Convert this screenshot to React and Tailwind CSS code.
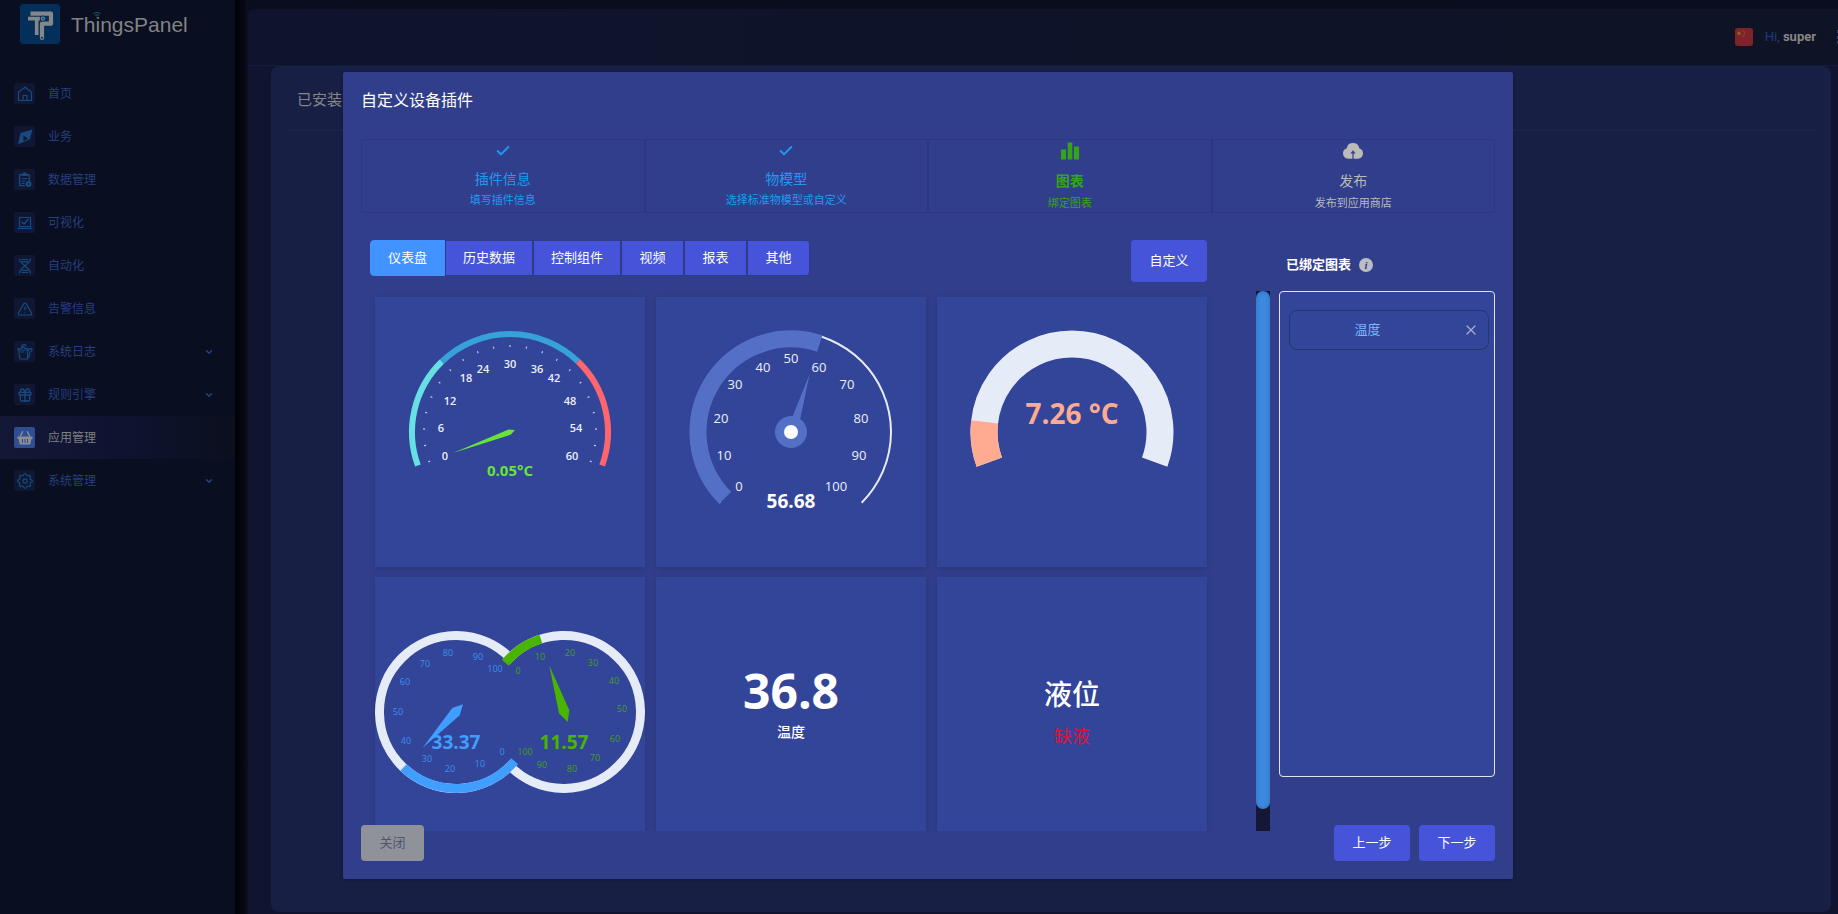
import React from "react";
import { House, TriangleAlert, Gift, ChevronDown, Check, X } from "lucide-react";

/* ---------- sidebar icons ---------- */

const stroke = {
  fill: "none",
  stroke: "currentColor",
  strokeWidth: 1.2,
  strokeLinecap: "round",
  strokeLinejoin: "round",
};

function Icon({ children }) {
  return (
    <svg viewBox="0 0 16 16" className="size-4" aria-hidden="true">
      {children}
    </svg>
  );
}

const HomeIcon = () => (
  <Icon>
    <path {...stroke} d="M1.5 6.2 8 1.2l6.500 5v8.300h-13z" />
    <path {...stroke} d="M6 14.500V9.500h4v5" />
  </Icon>
);

const CompassIcon = () => (
  <Icon>
    <path
      fill="currentColor"
      fillRule="evenodd"
      d="M15.500.5 12.800 10.200 1 15.200 3.500 4zM6.500 6.500v5.500l4.500-2.500z"
    />
  </Icon>
);

const ClipboardIcon = () => (
  <Icon>
    <path {...stroke} strokeWidth="1.400" d="M7.500 13.600H2.600V2.800h9.600v5.700" />
    <path fill="currentColor" d="M5 1.200h1.500a1 1 0 0 1 2 0H10v2.900H5z" />
    <path {...stroke} d="M5 6.500h5M5 9h3.500M5 11.300h2" />
    <circle cx="11.500" cy="12" r="3" fill="currentColor" />
    <circle cx="11.500" cy="12" r="0.800" fill="#0a1129" />
  </Icon>
);

const LaptopIcon = () => (
  <Icon>
    <path {...stroke} d="M2.500 11.500V2.500h11v9zM1 13.300h14" />
    <path {...stroke} strokeWidth="1.500" d="M5 7.200 7 9l4-4.500" />
  </Icon>
);

const DnaIcon = () => (
  <Icon>
    <path
      {...stroke}
      d="M2.500 1c0 5 11 8.500 11 14M13.500 1c0 5-11 8.500-11 14M5 1.500h6M5.500 3.700h5M5.500 12.300h5M5 14.500h6"
    />
  </Icon>
);

const JugIcon = () => (
  <Icon>
    <path {...stroke} d="M2 6h8.500v9H3C2 12 2 9 2 6zM1 6V4.500h3L6 2.500l2 2h3V6" />
    <path {...stroke} d="M5 3.500a2 2 0 0 1 4-1.500M10.800 7c1.500-3 4.200-3 4.200-1.200 0 2-3 2.200-2.700 4 .3 2-.3 3.700-1.800 4.200M4 8h3" />
  </Icon>
);

const BasketIcon = () => (
  <Icon>
    <path fill="currentColor" d="M.5 6.500h15v2.600h-1l-1.300 5.400H2.800L1.500 9.100h-1z" />
    <path {...stroke} strokeWidth="1.500" d="M3.500 6 5.500 1.800M12.500 6l-2-4.200" />
    <path stroke="#2d4f92" strokeWidth="1" d="M5.500 9v4M8 9v4M10.500 9v4" />
  </Icon>
);

const GearIcon = () => {
  const teeth = Array.from({ length: 32 }, (_, i) => {
    const r = i % 4 < 2 ? 7.3 : 5.7;
    const a = ((i - 0.5) * Math.PI) / 16;
    return `${(8 + r * Math.sin(a)).toFixed(2)},${(8 - r * Math.cos(a)).toFixed(2)}`;
  }).join(" ");
  return (
    <Icon>
      <polygon {...stroke} points={teeth} />
      <circle {...stroke} cx="8" cy="8" r="2.200" />
    </Icon>
  );
};

const NAV = [
  { label: "首页", icon: <HomeIcon /> },
  { label: "业务", icon: <CompassIcon /> },
  { label: "数据管理", icon: <ClipboardIcon /> },
  { label: "可视化", icon: <LaptopIcon /> },
  { label: "自动化", icon: <DnaIcon /> },
  { label: "告警信息", icon: <TriangleAlert size={16} strokeWidth={1.8} /> },
  { label: "系统日志", icon: <JugIcon />, more: true },
  { label: "规则引擎", icon: <Gift size={16} strokeWidth={2} />, more: true },
  { label: "应用管理", icon: <BasketIcon />, active: true },
  { label: "系统管理", icon: <GearIcon />, more: true },
];

function Logo() {
  return (
    <a href="#" className="ml-5 flex h-10 items-center gap-[11px]">
      <svg viewBox="0 0 40 40" className="size-10" aria-hidden="true">
        <rect width="40" height="40" rx="3" fill="#032f5a" />
        <g fill="none" stroke="#858789" strokeLinejoin="round">
          <path strokeWidth="4.200" d="M10.500 9.700H31V19.700H22V34" />
          <path strokeWidth="3.600" d="M8 14.600H20M16.700 14.600V31" />
        </g>
        <circle cx="22" cy="34" r="2.100" fill="#858789" />
        <circle cx="22.800" cy="14.600" r="2.600" fill="#858789" stroke="#032f5a" strokeWidth="1" />
        <circle cx="22.800" cy="14.600" r="1.200" fill="#0e5573" />
        <circle cx="22" cy="33.800" r="1" fill="#032f5a" />
      </svg>
      <span className="relative mt-0.5 font-['Liberation_Sans',sans-serif] text-[21px] leading-6 text-[#828385]">
        ThingsPanel
        <svg viewBox="0 0 8 6" className="absolute -top-px left-[22px] h-1.5 w-2" aria-hidden="true">
          <path d="M.5 1.800Q4-.8 7.500 1.800M2 3.500q2-1.300 4 0" fill="none" stroke="#12505f" strokeWidth="1.200" />
          <circle cx="4" cy="5.200" r=".8" fill="#12505f" />
        </svg>
      </span>
    </a>
  );
}

function Sidebar() {
  return (
    <aside className="w-[235px] shrink-0 bg-[#090e20] pt-1">
      <Logo />
      <nav className="mt-7">
        {NAV.map((item) => (
          <a
            key={item.label}
            href="#"
            className={
              "flex h-[43px] items-center pr-[21px] pl-3.5 text-xs " +
              (item.active
                ? "bg-linear-to-r from-[#121836] via-[#0e1430] to-[#0b0f1e] text-[#808080]"
                : "text-[#273f7f]")
            }
          >
            <span
              className={
                "flex size-[21px] items-center justify-center rounded-xs " +
                (item.active ? "bg-[#2d4f92] text-[#8b8d93]" : "bg-[#0f1733] text-[#184a80]")
              }
            >
              {item.icon}
            </span>
            <span className="ml-[13px] flex-1 pb-0.5">{item.label}</span>
            {item.more && <ChevronDown size={10} strokeWidth={3.500} className="text-[#27437f]" />}
          </a>
        ))}
      </nav>
    </aside>
  );
}

function Header() {
  return (
    <header className="flex h-[57px] items-center justify-end overflow-hidden rounded-tl-md border-b border-[#141b3b] bg-linear-to-r from-[#0f132d] to-[#0e1325]">
      <svg viewBox="0 0 18 18" className="size-[18px] shrink-0" aria-hidden="true">
        <rect width="18" height="18" rx="3" fill="#7d2329" />
        <path fill="#8a6a1e" d="m4 3 .7 1.500 1.600.1-1.200 1.100.4 1.600L4 6.500l-1.500.8.4-1.600-1.200-1.100 1.600-.1z" />
        <g fill="#8a5a1e">
          <circle cx="8" cy="2.800" r=".7" />
          <circle cx="9.600" cy="4.300" r=".7" />
          <circle cx="9.600" cy="6.400" r=".7" />
          <circle cx="8" cy="8" r=".7" />
        </g>
      </svg>
      <span className="ml-3 font-[Roboto,sans-serif] text-[13px] whitespace-nowrap text-[#223a80]">
        Hi, <b className="text-[#868686]">super</b>
      </span>
      <button type="button" aria-label="更多" className="-mr-3.5 ml-5 h-4 w-4 shrink-0 translate-x-0 text-[#27407f]">
        <svg viewBox="0 0 16 16" className="size-4" aria-hidden="true">
          <path
            fill="currentColor"
            d="M1 1h3v3H1zM7 1h3v3H7zM13 1h3v3h-3zM1 7h3v3H1zM7 7h3v3H7zM13 7h3v3h-3zM1 12h3v3H1zM7 12h3v3H7zM13 12h3v3h-3z"
          />
        </svg>
      </button>
    </header>
  );
}

/* ---------- gauges ---------- */

const point = (cx, cy, r, deg) => {
  const a = (deg * Math.PI) / 180;
  return [(cx + r * Math.cos(a)).toFixed(2), (cy - r * Math.sin(a)).toFixed(2)];
};

/* Clockwise arc between two angles, measured counter-clockwise from east. */
function Arc({ cx = 135, cy = 135, r, from, to, width, color }) {
  const [x1, y1] = point(cx, cy, r, from);
  const [x2, y2] = point(cx, cy, r, to);
  const large = from - to > 180 ? 1 : 0;
  return (
    <path
      d={`M${x1} ${y1}A${r} ${r} 0 ${large} 1 ${x2} ${y2}`}
      fill="none"
      stroke={color}
      strokeWidth={width}
    />
  );
}

function Labels({ items, size, color, weight = 400 }) {
  return items.map(([text, x, y]) => (
    <text
      key={text}
      x={x}
      y={y}
      dy="0.36em"
      textAnchor="middle"
      fontSize={size}
      fontWeight={weight}
      fill={color}
    >
      {text}
    </text>
  ));
}

function Chart({ children, label }) {
  return (
    <svg
      viewBox="0 0 270 270"
      role="img"
      aria-label={label}
      className="size-full font-['Open_Sans','Noto_Sans',sans-serif]"
    >
      {children}
    </svg>
  );
}

function TemperatureGauge() {
  return (
    <Chart label="0.05°C">
      <Arc r={98} from={200} to={134} width={6} color="#67e0e3" />
      <Arc r={98} from={134} to={46} width={6} color="#37a2da" />
      <Arc r={98} from={46} to={-20} width={6} color="#fd666d" />
      {Array.from({ length: 21 }, (_, i) => {
        const [x1, y1] = point(135, 135, 87, 200 - i * 11);
        const [x2, y2] = point(135, 135, 85, 200 - i * 11);
        return <line key={i} x1={x1} y1={y1} x2={x2} y2={y2} stroke="#c5cbe4" strokeWidth="1.200" />;
      })}
      <Labels
        size={11}
        weight={600}
        color="#eef0f8"
        items={[
          ["0", 70, 159],
          ["6", 66, 131],
          ["12", 75, 104],
          ["18", 91, 81],
          ["24", 108, 72],
          ["30", 135, 67],
          ["36", 162, 72],
          ["42", 179, 81],
          ["48", 195, 104],
          ["54", 201, 131],
          ["60", 197, 159],
        ]}
      />
      <path d="M78 156 133.500 132.400 140 133 136 137.600z" fill="#67e33a" />
      <text x="135" y="179" textAnchor="middle" fontSize="15" fontWeight="700" fill="#67e33a">
        0.05°C
      </text>
    </Chart>
  );
}

function SpeedGauge() {
  return (
    <Chart label="56.68">
      <Arc r={100} from={225} to={-45} width={2} color="#e6ebf8" />
      <Arc r={93} from={225} to={72} width={17} color="#5470c6" />
      <path d="M153.700 77 135.500 122 144 123z" fill="#5470c6" />
      <circle cx="135" cy="135" r="16" fill="#5470c6" />
      <circle cx="135" cy="135" r="7" fill="#fff" />
      <Labels
        size={13}
        weight={500}
        color="#eef0f8"
        items={[
          ["0", 83, 189],
          ["10", 68, 158],
          ["20", 65, 121],
          ["30", 79, 87],
          ["40", 107, 70],
          ["50", 135, 61],
          ["60", 163, 70],
          ["70", 191, 87],
          ["80", 205, 121],
          ["90", 203, 158],
          ["100", 180, 189],
        ]}
      />
      <text x="135" y="211" textAnchor="middle" fontSize="19" fontWeight="700" fill="#fff">
        56.68
      </text>
    </Chart>
  );
}

function RingGauge() {
  return (
    <Chart label="7.26 °C">
      <Arc r={88} from={200} to={-20} width={27} color="#e6ebf8" />
      <Arc r={88} from={200} to={173.400} width={27} color="#ffab91" />
      <text x="135" y="127" textAnchor="middle" fontSize="28" fontWeight="700" fill="#ffab91">
        7.26 °C
      </text>
    </Chart>
  );
}

function DoubleGauge() {
  return (
    <Chart label="33.37 / 11.57">
      <Arc cx={81} r={76.500} from={318} to={44} width={9} color="#e6ebf8" />
      <Arc cx={189} r={76.500} from={138} to={-136} width={9} color="#e6ebf8" />
      <Arc cx={81} r={76.500} from={320} to={226.600} width={9} color="#409eff" />
      <Arc cx={189} r={76.500} from={140} to={107.600} width={9} color="#4ab500" />
      <Labels
        size={9}
        weight={500}
        color="#3c8ff0"
        items={[
          ["0", 127, 175],
          ["10", 105, 187],
          ["20", 75, 192],
          ["30", 52, 182],
          ["40", 31, 164],
          ["50", 23, 135],
          ["60", 30, 105],
          ["70", 50, 87],
          ["80", 73, 76],
          ["90", 103, 80],
          ["100", 120, 92],
        ]}
      />
      <Labels
        size={9}
        weight={500}
        color="#459f1c"
        items={[
          ["0", 143, 94],
          ["10", 165, 80],
          ["20", 195, 76],
          ["30", 218, 86],
          ["40", 239, 104],
          ["50", 247, 132],
          ["60", 240, 162],
          ["70", 220, 181],
          ["80", 197, 192],
          ["90", 167, 188],
          ["100", 150, 175],
        ]}
      />
      <path d="M47.500 171 77.300 131 88 127.300 84.700 138.300z" fill="#409eff" />
      <path d="M174.300 88.500 184 136.300 192.700 145 194.300 133.300z" fill="#4ab500" />
      <text x="81" y="172" textAnchor="middle" fontSize="19" fontWeight="700" fill="#409eff">
        33.37
      </text>
      <text x="189" y="172" textAnchor="middle" fontSize="19" fontWeight="700" fill="#4ab500">
        11.57
      </text>
    </Chart>
  );
}

function Card({ children }) {
  return (
    <div className="flex aspect-square flex-col items-center justify-center bg-[#324599] shadow-[0_2px_6px_rgba(0,0,0,0.15)]">
      {children}
    </div>
  );
}

/* ---------- dialog ---------- */

function Step({ icon, title, desc, className }) {
  return (
    <li className={"flex flex-1 flex-col items-center border border-[#2c3785] " + className}>
      {icon}
      {title}
      <span className="text-[11px] leading-4">{desc}</span>
    </li>
  );
}

function Steps() {
  const checked = (
    <span className="flex h-[22px] items-center">
      <Check size={16} strokeWidth={3} />
    </span>
  );
  return (
    <ol className="flex h-[74px]">
      <Step
        className="text-[#1d9bf0]"
        icon={checked}
        title={<span className="mt-1.5 mb-[3px] text-sm leading-5">插件信息</span>}
        desc="填写插件信息"
      />
      <Step
        className="text-[#1d9bf0]"
        icon={checked}
        title={<span className="mt-1.5 mb-[3px] text-sm leading-5">物模型</span>}
        desc="选择标准物模型或自定义"
      />
      <Step
        className="text-[#36a417]"
        icon={
          <svg viewBox="0 0 18 18" className="mt-[2px] size-[18px]" aria-hidden="true">
            <path fill="currentColor" d="M0 7.500h5v10H0zM6.700.5h4.600v17H6.700zM13 4.500h5v13h-5z" />
          </svg>
        }
        title={<b className="mt-2.5 mb-1 text-sm leading-5">图表</b>}
        desc="绑定图表"
      />
      <Step
        className="text-[#bbbbb9]"
        icon={
          <svg viewBox="0 0 22 18" className="mt-[2px] h-[18px] w-[22px]" aria-hidden="true">
            <path
              fill="currentColor"
              fillRule="evenodd"
              d="M6 16.700A5.400 5.400 0 0 1 4.700 6.200a6.400 6.400 0 0 1 12.600 0A5.400 5.400 0 0 1 16 16.700h-4.400V11.500h2L11 8.300l-2.600 3.200h2v5.200z"
            />
          </svg>
        }
        title={<span className="mt-2.5 mb-1 text-sm leading-5">发布</span>}
        desc="发布到应用商店"
      />
    </ol>
  );
}

const TABS = ["仪表盘", "历史数据", "控制组件", "视频", "报表", "其他"];

function Tabs() {
  return (
    <div className="flex h-9" role="tablist">
      {TABS.map((tab, i) => (
        <button
          key={tab}
          type="button"
          role="tab"
          aria-selected={i === 0}
          className={
            "min-w-[63px] border px-[17px] pb-[3px] text-[13px] text-white first:rounded-l last:rounded-r " +
            (i === 0 ? "border-[#4292ff] bg-[#4292ff]" : "border-[#2f3a8c] bg-[#4554d8]")
          }
        >
          {tab}
        </button>
      ))}
    </div>
  );
}

function ChartLibrary() {
  return (
    <section className="min-w-0 flex-1">
      <div className="mr-[63px] ml-[9px] flex h-[51px] items-start justify-between">
        <Tabs />
        <button type="button" className="h-[42px] min-w-[76px] rounded bg-[#4554d8] pb-[3px] text-[13px] text-white">
          自定义
        </button>
      </div>
      <div className="flex h-[540px]">
        <div className="min-w-0 flex-1 overflow-y-auto pt-1.5 pr-[49px] pl-3.5 [scrollbar-width:none]">
          <div className="grid grid-cols-3 gap-x-[11px] gap-y-2.5">
            <Card>
              <TemperatureGauge />
            </Card>
            <Card>
              <SpeedGauge />
            </Card>
            <Card>
              <RingGauge />
            </Card>
            <Card>
              <DoubleGauge />
            </Card>
            <Card>
              <b className="font-['Open_Sans','Noto_Sans',sans-serif] text-[48px] leading-[52px] text-white">36.8</b>
              <span className="mt-1 mb-[18px] text-sm leading-5 font-medium text-white">温度</span>
            </Card>
            <Card>
              <span className="text-[28px] leading-8 font-medium text-white">液位</span>
              <span className="mt-3.5 text-lg leading-6 text-[#dc143c]">缺液</span>
            </Card>
          </div>
        </div>
        <div className="w-3.5 shrink-0 bg-[#141836]">
          <div className="h-[96%] rounded-full bg-[#3c8ae0] shadow-[inset_0_0_5px_rgba(0,0,0,0.2)]" />
        </div>
      </div>
    </section>
  );
}

function BoundCharts() {
  return (
    <section className="w-[216px] shrink-0">
      <h3 className="flex h-[51px] items-center pb-[3px] pl-[7px] text-[13px] font-bold text-white">
        已绑定图表
        <svg viewBox="0 0 14 14" className="mt-0.5 ml-2 size-3.5" role="img" aria-label="提示">
          <circle cx="7" cy="7" r="7" fill="#bcbcc4" />
          <text
            x="7"
            y="11"
            textAnchor="middle"
            className="font-['Liberation_Serif',serif] text-[11px] font-bold italic"
            fill="#34408a"
          >
            i
          </text>
        </svg>
      </h3>
      <ul className="h-[486px] rounded border border-[#e4e4ee] bg-[#324599] pt-[18px] pr-[5px] pl-[9px]">
        <li className="flex h-10 items-center rounded-lg border border-[#27346f] pr-[9px]">
          <span className="flex-1 pr-[18px] pb-0.5 text-center text-[13px] text-[#7db7fb]">温度</span>
          <button type="button" aria-label="移除" className="text-[#a9aeca]">
            <X size={16} strokeWidth={1.800} />
          </button>
        </li>
      </ul>
    </section>
  );
}

function PluginDialog() {
  const action = "h-9 min-w-[76px] rounded bg-[#4554d8] pb-[3px] text-[13px] text-white";
  return (
    <div className="absolute inset-0 flex items-start justify-center pt-[72px] pl-[18px]">
      <div
        role="dialog"
        aria-labelledby="dialog-title"
        className="w-full max-w-[1170px] rounded-xs bg-[#313e8c] p-[18px] shadow-[0_1px_3px_rgba(0,0,0,0.3)]"
      >
        <h2 id="dialog-title" className="mb-[30px] text-base leading-[19px] text-white">
          自定义设备插件
        </h2>
        <Steps />
        <div className="mt-[27px] flex gap-[9px]">
          <ChartLibrary />
          <BoundCharts />
        </div>
        <footer className="relative -mt-1.5 flex gap-[9px]">
          <button
            type="button"
            className="mr-auto h-9 min-w-[63px] rounded bg-[#8f9299] pb-[3px] text-[13px] text-[#4f5670]"
          >
            关闭
          </button>
          <button type="button" className={action}>
            上一步
          </button>
          <button type="button" className={action}>
            下一步
          </button>
        </footer>
      </div>
    </div>
  );
}

export default function App() {
  return (
    <div className="relative flex min-h-screen overflow-hidden bg-[#0a0d1d] font-['Noto_Sans_CJK_SC',sans-serif]">
      <Sidebar />
      <div className="w-[13px] shrink-0 bg-linear-to-r from-[#010104] to-[#0d0f20]" />
      <div className="flex min-w-0 flex-1 flex-col pt-[9px]">
        <Header />
        <main className="flex flex-1 flex-col bg-[#10142f] pr-[7px] pb-0.5 pl-[23px]">
          <section className="flex-1 rounded-lg bg-[#181f44] pr-[15px] pl-3.5">
            <h1 className="flex h-[65px] items-center border-b border-[#1e2548] pt-0.5 pl-3 text-[15px] text-[#868686]">
              已安装
            </h1>
          </section>
        </main>
      </div>
      <PluginDialog />
    </div>
  );
}
